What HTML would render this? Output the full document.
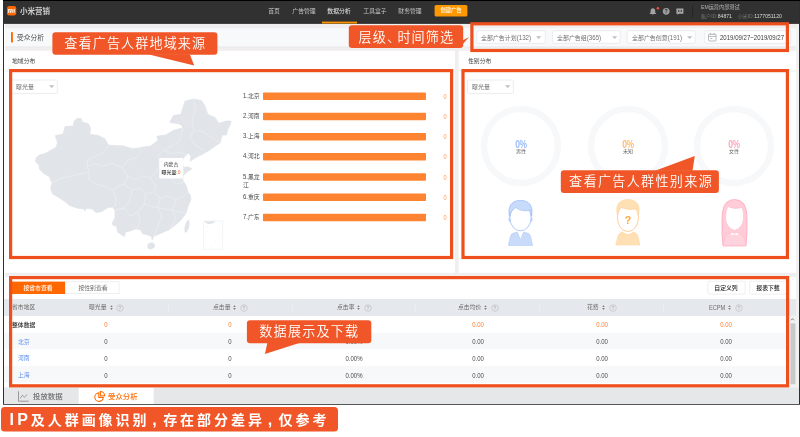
<!DOCTYPE html>
<html lang="zh-CN"><head><meta charset="utf-8"><title>小米营销 - 受众分析</title>
<style>
html,body{margin:0;padding:0;background:#fff;}
body{width:800px;height:437px;overflow:hidden;position:relative;font-family:"Liberation Sans","Noto Sans CJK SC",sans-serif;-webkit-text-size-adjust:none;}
.a{position:absolute;display:block;}
.t{white-space:nowrap;}
.s{transform-origin:0 0;}
.d{display:inline-block;transform:scaleY(1.18);}
#ui{position:absolute;left:0;top:0;width:800px;height:437px;will-change:transform;}
#app,#notes{position:absolute;left:0;top:0;width:800px;height:437px;}
svg{overflow:visible;}
</style></head><body><div id="ui"><div id="app">
<svg class="a" style="left:2px;top:-1px" width="799" height="407"><rect x="1.00" y="1.00" width="797.00" height="404.80" fill="#2e2e2e"/></svg>
<svg class="a" style="left:2px;top:-1px" width="799" height="3"><rect x="1.00" y="1.00" width="797.00" height="1.00" fill="#000"/></svg>
<svg class="a" style="left:3px;top:0px" width="797" height="405"><rect x="1.00" y="1.00" width="795.00" height="403.00" fill="#fff"/></svg>
<svg class="a" style="left:4px;top:22px" width="796" height="383"><rect x="1.00" y="1.50" width="794.00" height="380.50" fill="#f0eeef"/></svg>
<svg class="a" style="left:795px;top:22px" width="5" height="383"><rect x="1.00" y="1.50" width="3.00" height="380.50" fill="#f2f1f2"/></svg>
<svg class="a" style="left:3px;top:0px" width="797" height="25"><rect x="1.00" y="1.00" width="795.00" height="22.90" fill="#313131"/></svg>
<svg class="a" style="left:7px;top:6px" width="9.2" height="9.4" viewBox="0 0 92 94"><rect width="92" height="94" rx="22" fill="#ff6700"/><path d="M12 29H44Q57 29 57 41V67H46V42Q46 38 42 38H23V67H12ZM29.500 46H39.500V67H29.500ZM66 29H77V67H66Z" fill="#fff"/></svg>
<div class="a t s" style="left:19.90px;top:4.90px;font-size:60.00px;line-height:96.00px;color:#cdcdcd;font-weight:700;transform:scale(0.125);">小米营销</div>
<div class="a t s" style="left:274.40px;top:5.92px;font-size:46.80px;line-height:74.88px;color:#c6c6c6;transform:scale(0.125) translateX(-50%);">首页</div>
<div class="a t s" style="left:303.85px;top:5.92px;font-size:46.80px;line-height:74.88px;color:#c6c6c6;transform:scale(0.125) translateX(-50%);">广告管理</div>
<div class="a t s" style="left:339.20px;top:5.92px;font-size:46.80px;line-height:74.88px;color:#ececec;transform:scale(0.125) translateX(-50%);">数据分析</div>
<div class="a t s" style="left:374.65px;top:5.92px;font-size:46.80px;line-height:74.88px;color:#c6c6c6;transform:scale(0.125) translateX(-50%);">工具盒子</div>
<div class="a t s" style="left:409.90px;top:5.92px;font-size:46.80px;line-height:74.88px;color:#c6c6c6;transform:scale(0.125) translateX(-50%);">财务管理</div>
<svg class="a" style="left:321px;top:20px" width="37" height="5"><rect x="1.00" y="1.60" width="35.00" height="1.90" fill="#ff9500"/></svg>
<svg class="a" style="left:433px;top:4px" width="36" height="14"><rect x="1.60" y="1.00" width="32.80" height="11.60" rx="1.5" fill="#ff9800"/></svg>
<div class="a t s" style="left:451.00px;top:6.26px;font-size:42.40px;line-height:67.84px;color:#fff;font-weight:500;transform:scale(0.125) translateX(-50%);">创建广告</div>
<svg class="a" style="left:648px;top:6px" width="40" height="11" viewBox="0 0 40 11">
<path d="M4.900 2.200c1.500 0 2.300 1 2.300 2.400v1.900l.9 1.100v.5H1.700v-.5l.9-1.100V4.600c0-1.400.8-2.400 2.300-2.400zM4.100 8.500h1.600c0 .5-.4.800-.8.800s-.8-.3-.8-.8z" fill="#a2a2a2"/>
<circle cx="9.900" cy="2.200" r="1.200" fill="#ff4d3a"/>
<circle cx="18.200" cy="5.300" r="3.400" fill="#9c9c9c"/>
<text x="18.200" y="7.200" font-size="5.200" font-weight="700" text-anchor="middle" fill="#333" font-family="Liberation Sans, sans-serif">?</text>
<path d="M28.400 2.400h7v5.300h-4.700l-1.300 1.200v-1.200h-1z" fill="#a6a6a6"/>
<rect x="30" y="4.200" width="1.400" height="1.500" fill="#333"/><rect x="32.600" y="4.200" width="1.400" height="1.500" fill="#333"/>
</svg>
<svg class="a" style="left:691px;top:4px" width="3" height="15"><rect x="1.10" y="1.50" width="0.90" height="12.50" fill="#232323"/></svg>
<div class="a t s" style="left:701.00px;top:3.38px;font-size:41.20px;line-height:65.92px;color:#b4b4b4;transform:scale(0.125);">EM运营内部测试</div>
<div class="a t s" style="left:701.00px;top:11.82px;font-size:40.80px;line-height:65.28px;color:#eee;transform:scale(0.125);"><span style="color:#747474">账户ID:</span><span class="d" style="color:#dadada">84871</span><span style="color:#747474;margin-left:44.80px">小米ID:</span><span class="d" style="color:#dadada">1177051120</span></div>
<svg class="a" style="left:4px;top:27px" width="793" height="21"><rect x="1.00" y="1.20" width="791.00" height="18.50" fill="#f8f9fb"/></svg>
<svg class="a" style="left:4px;top:45px" width="793" height="4"><rect x="1.00" y="1.60" width="791.00" height="0.90" fill="#e9e7e8"/></svg>
<svg class="a" style="left:10px;top:31px" width="4" height="13"><rect x="1.00" y="1.20" width="1.90" height="10.20" fill="#ff6a00"/></svg>
<div class="a t s" style="left:17.00px;top:32.20px;font-size:54.00px;line-height:86.40px;color:#505050;transform:scale(0.125);">受众分析</div>
<svg class="a" style="left:475px;top:29px" width="72" height="16"><rect x="1.80" y="1.70" width="68.50" height="12.60" rx="1.0" fill="#fff" stroke="#dfe0e3" stroke-width="0.6"/></svg>
<div class="a t s" style="left:481.30px;top:32.54px;font-size:47.60px;line-height:76.16px;color:#707070;transform:scale(0.125);">全部广告计划<span class="d" style="font-size:49.20px">(132)</span></div>
<svg class="a" style="left:536.40px;top:35.50px" width="5.400" height="3"><path d="M0.100 0.200h5.200L2.700 2.900z" fill="#bcbec2"/></svg>
<svg class="a" style="left:551px;top:29px" width="71" height="16"><rect x="1.50" y="1.70" width="67.70" height="12.60" rx="1.0" fill="#fff" stroke="#dfe0e3" stroke-width="0.6"/></svg>
<div class="a t s" style="left:556.50px;top:32.54px;font-size:47.60px;line-height:76.16px;color:#707070;transform:scale(0.125);">全部广告组<span class="d" style="font-size:49.20px">(365)</span></div>
<svg class="a" style="left:611.60px;top:35.50px" width="5.400" height="3"><path d="M0.100 0.200h5.200L2.700 2.900z" fill="#bcbec2"/></svg>
<svg class="a" style="left:625px;top:29px" width="72" height="16"><rect x="2.20" y="1.70" width="67.90" height="12.60" rx="1.0" fill="#fff" stroke="#dfe0e3" stroke-width="0.6"/></svg>
<div class="a t s" style="left:631.70px;top:32.54px;font-size:47.60px;line-height:76.16px;color:#707070;transform:scale(0.125);">全部广告创意<span class="d" style="font-size:49.20px">(191)</span></div>
<svg class="a" style="left:686.80px;top:35.50px" width="5.400" height="3"><path d="M0.100 0.200h5.200L2.700 2.900z" fill="#bcbec2"/></svg>
<svg class="a" style="left:703px;top:29px" width="90" height="16"><rect x="1.80" y="1.70" width="86.00" height="12.60" rx="1.0" fill="#fff" stroke="#dfe0e3" stroke-width="0.6"/></svg>
<svg class="a" style="left:708px;top:33.400px" width="8.600" height="8.600" viewBox="0 0 86 86"><rect x="5" y="12" width="76" height="68" rx="8" fill="none" stroke="#9a9da2" stroke-width="7"/><path d="M5 34h76M26 2v18M60 2v18M22 56h22" stroke="#9a9da2" stroke-width="7" fill="none"/></svg>
<div class="a t s" style="left:720.00px;top:32.76px;font-size:48.40px;line-height:77.44px;color:#3a3a3a;transform:scale(0.125);"><span class="d">2019/09/27~2019/09/27</span></div>
<svg class="a" style="left:4px;top:49px" width="452" height="225"><rect x="1.00" y="1.80" width="450.00" height="222.00" fill="#fff"/></svg>
<div class="a t s" style="left:11.90px;top:55.62px;font-size:46.80px;line-height:74.88px;color:#444;transform:scale(0.125);">地域分布</div>
<svg class="a" style="left:4px;top:69px" width="452" height="4"><rect x="1.00" y="1.50" width="450.00" height="0.80" fill="#e8e8e8"/></svg>
<svg class="a" style="left:9px;top:78px" width="50" height="17"><rect x="1.30" y="2.00" width="47.00" height="13.40" rx="1.0" fill="#fff" stroke="#dfe0e3" stroke-width="0.6"/></svg>
<div class="a t s" style="left:15.70px;top:82.04px;font-size:47.60px;line-height:76.16px;color:#707070;transform:scale(0.125);">曝光量</div>
<svg class="a" style="left:48.90px;top:85.00px" width="5.400" height="3"><path d="M0.100 0.200h5.200L2.700 2.900z" fill="#bcbec2"/></svg>
<svg class="a" style="left:0;top:0" width="460" height="260" viewBox="0 0 460 260"><path d="M39.6 155.0 L45.1 153.5 L56.1 147.3 L57.5 142.5 L55.4 135.6 L63.0 134.2 L65.1 126.6 L73.3 126.0 L74.0 121.1 L77.5 118.4 L80.9 118.4 L82.3 121.8 L88.5 123.9 L90.5 128.0 L89.8 134.2 L98.8 135.6 L105.0 139.0 L108.4 145.2 L123.5 145.9 L131.8 148.6 L138.3 148.0 L150.6 145.9 L158.2 140.4 L156.8 136.3 L165.8 134.9 L174.0 130.1 L183.0 128.0 L180.9 124.6 L175.4 123.2 L169.9 122.5 L173.3 115.6 L180.9 114.3 L183.0 107.4 L185.0 101.2 L193.3 99.1 L201.5 100.5 L205.0 106.0 L207.7 114.3 L215.3 117.7 L218.7 123.2 L226.3 121.1 L231.1 121.1 L230.4 124.6 L228.3 128.0 L226.3 134.9 L222.2 134.9 L220.1 143.1 L215.3 145.9 L209.8 150.0 L203.3 153.8 L195.0 157.9 L190.2 161.3 L190.9 155.8 L188.1 153.1 L185.4 155.8 L183.3 158.6 L182.0 163.0 L184.0 167.5 L188.1 166.8 L192.0 168.9 L187.5 171.6 L183.3 175.8 L182.6 179.9 L186.1 185.4 L188.1 192.3 L190.2 195.0 L190.9 199.8 L188.1 206.0 L186.1 212.9 L181.3 219.8 L175.8 224.6 L169.6 229.4 L162.0 232.8 L153.8 236.3 L152.2 239.9 L151.5 236.5 L148.0 235.1 L142.5 233.7 L140.5 229.6 L135.7 228.9 L130.2 230.9 L125.3 232.3 L124.7 236.5 L121.9 235.1 L117.8 232.3 L116.4 226.1 L113.0 225.4 L112.3 222.7 L115.0 217.9 L115.0 211.0 L113.0 206.9 L108.1 207.6 L101.3 211.7 L95.8 212.4 L92.3 208.9 L86.1 208.3 L84.8 211.0 L84.1 208.9 L77.9 208.3 L69.6 205.5 L64.1 201.0 L59.6 198.1 L52.7 194.0 L50.6 188.5 L52.0 183.0 L49.3 176.8 L43.8 173.4 L39.6 169.3 L38.9 165.1 L35.5 161.7 L36.2 157.6Z" fill="#e1e5ea" stroke="#e1e5ea" stroke-width="0.8" stroke-linejoin="round"/><path d="M108.4 145.2 L104 152 L96 156 L88 160 L87 166 L89 172 L84 173 L72 176 L62 178 L52 183" fill="none" stroke="#f0f2f5" stroke-width="0.5" stroke-linejoin="round"/><path d="M87 166 L96 164 L104 166 L112 163 L122 168 L128 176 L124 184 L119 186 L113 190 L104 186 L96 184 L89 180 L89 172" fill="none" stroke="#f0f2f5" stroke-width="0.5" stroke-linejoin="round"/><path d="M113 190 L116 198 L115 207" fill="none" stroke="#f0f2f5" stroke-width="0.5" stroke-linejoin="round"/><path d="M122 168 L128 160 L136 158 L142 152 L138.3 148" fill="none" stroke="#f0f2f5" stroke-width="0.5" stroke-linejoin="round"/><path d="M128 176 L136 180 L142 176 L150 178 L156 172 L160 164 L158 156 L164 150 L172 146 L180 140 L183 128" fill="none" stroke="#f0f2f5" stroke-width="0.5" stroke-linejoin="round"/><path d="M124 184 L132 190 L140 188 L146 194 L154 192 L160 198 L168 196 L176 200 L184 196 L188 192" fill="none" stroke="#f0f2f5" stroke-width="0.5" stroke-linejoin="round"/><path d="M132 190 L130 200 L124 208 L116 210" fill="none" stroke="#f0f2f5" stroke-width="0.5" stroke-linejoin="round"/><path d="M146 194 L144 204 L138 212 L140 222 L136 229" fill="none" stroke="#f0f2f5" stroke-width="0.5" stroke-linejoin="round"/><path d="M160 198 L158 208 L162 216 L158 226 L154 236" fill="none" stroke="#f0f2f5" stroke-width="0.5" stroke-linejoin="round"/><path d="M176 200 L172 210 L176 218 L170 229" fill="none" stroke="#f0f2f5" stroke-width="0.5" stroke-linejoin="round"/><path d="M144 204 L158 208 L172 210 L186 213" fill="none" stroke="#f0f2f5" stroke-width="0.5" stroke-linejoin="round"/><path d="M124 208 L130 216 L138 212" fill="none" stroke="#f0f2f5" stroke-width="0.5" stroke-linejoin="round"/><path d="M160 164 L168 168 L176 164 L183 167" fill="none" stroke="#f0f2f5" stroke-width="0.5" stroke-linejoin="round"/><path d="M164 150 L172 154 L180 152 L186 155" fill="none" stroke="#f0f2f5" stroke-width="0.5" stroke-linejoin="round"/><path d="M150 178 L156 186 L154 192" fill="none" stroke="#f0f2f5" stroke-width="0.5" stroke-linejoin="round"/><path d="M168 168 L170 178 L176 184 L184 182" fill="none" stroke="#f0f2f5" stroke-width="0.5" stroke-linejoin="round"/><path d="M193.300 99.100 L196 110 L192 120 L194 130 L190 138 L196 146 L204 150" fill="none" stroke="#f0f2f5" stroke-width="0.5" stroke-linejoin="round"/><path d="M194 130 L204 132 L212 138 L220 143" fill="none" stroke="#f0f2f5" stroke-width="0.5" stroke-linejoin="round"/><ellipse cx="151.1" cy="245.8" rx="3.9" ry="3.3" fill="#e1e5ea" transform="rotate(-25 151.1 245.8)"/><ellipse cx="187" cy="226.400" rx="2.200" ry="6.500" fill="#e1e5ea" transform="rotate(14 187 226.400)"/><rect x="203.400" y="221" width="19.400" height="28.200" fill="#fff" stroke="#eceef1" stroke-width="0.600"/><path d="M204.200 221.300h11.500q-1.500 2.600-5.500 2.800-4.500 0-6-2.800z" fill="#e1e5ea"/><circle cx="207.4" cy="227" r="0.450" fill="#e3e6ea"/><circle cx="219" cy="230.5" r="0.450" fill="#e3e6ea"/><circle cx="208" cy="235.5" r="0.450" fill="#e3e6ea"/><circle cx="218.5" cy="236" r="0.450" fill="#e3e6ea"/><circle cx="205.5" cy="241" r="0.450" fill="#e3e6ea"/><circle cx="215" cy="241.5" r="0.450" fill="#e3e6ea"/><circle cx="211" cy="246" r="0.450" fill="#e3e6ea"/><circle cx="207" cy="231.5" r="0.450" fill="#e3e6ea"/><circle cx="220.5" cy="225" r="0.450" fill="#e3e6ea"/></svg>
<svg class="a" style="left:158px;top:157px" width="27" height="23"><rect x="1.30" y="1.00" width="24.00" height="20.40" rx="1.0" fill="rgba(255,255,255,0.96)"/></svg>
<div class="a t s" style="left:171.40px;top:159.68px;font-size:39.20px;line-height:62.72px;color:#333;transform:scale(0.125) translateX(-50%);">内蒙古</div>
<div class="a t s" style="left:171.40px;top:168.08px;font-size:39.20px;line-height:62.72px;color:#333;font-weight:500;transform:scale(0.125) translateX(-50%);">曝光量:<span style="color:#ff7a2e;font-weight:400">0</span></div>
<svg class="a" style="left:262px;top:91px" width="165" height="10"><rect x="1.00" y="1.50" width="163.00" height="7.50" rx="0.8" fill="#ff8432"/></svg>
<div class="a t s" style="left:243.20px;top:90.72px;font-size:46.80px;line-height:74.88px;color:#484848;transform:scale(0.125);"><span class="d" style="font-size:48.00px">1.</span>北京</div>
<div class="a t s" style="left:444.60px;top:91.82px;font-size:44.80px;line-height:71.68px;color:#ff9a55;transform:scale(0.125) translateX(-50%);"><span class="d">0</span></div>
<svg class="a" style="left:262px;top:111px" width="165" height="11"><rect x="1.00" y="1.70" width="163.00" height="7.50" rx="0.8" fill="#ff8432"/></svg>
<div class="a t s" style="left:243.20px;top:110.92px;font-size:46.80px;line-height:74.88px;color:#484848;transform:scale(0.125);"><span class="d" style="font-size:48.00px">2.</span>河南</div>
<div class="a t s" style="left:444.60px;top:112.02px;font-size:44.80px;line-height:71.68px;color:#ff9a55;transform:scale(0.125) translateX(-50%);"><span class="d">0</span></div>
<svg class="a" style="left:262px;top:131px" width="165" height="11"><rect x="1.00" y="1.90" width="163.00" height="7.50" rx="0.8" fill="#ff8432"/></svg>
<div class="a t s" style="left:243.20px;top:131.12px;font-size:46.80px;line-height:74.88px;color:#484848;transform:scale(0.125);"><span class="d" style="font-size:48.00px">3.</span>上海</div>
<div class="a t s" style="left:444.60px;top:132.22px;font-size:44.80px;line-height:71.68px;color:#ff9a55;transform:scale(0.125) translateX(-50%);"><span class="d">0</span></div>
<svg class="a" style="left:262px;top:152px" width="165" height="10"><rect x="1.00" y="1.10" width="163.00" height="7.50" rx="0.8" fill="#ff8432"/></svg>
<div class="a t s" style="left:243.20px;top:151.32px;font-size:46.80px;line-height:74.88px;color:#484848;transform:scale(0.125);"><span class="d" style="font-size:48.00px">4.</span>河北</div>
<div class="a t s" style="left:444.60px;top:152.42px;font-size:44.80px;line-height:71.68px;color:#ff9a55;transform:scale(0.125) translateX(-50%);"><span class="d">0</span></div>
<svg class="a" style="left:262px;top:172px" width="165" height="10"><rect x="1.00" y="1.30" width="163.00" height="7.50" rx="0.8" fill="#ff8432"/></svg>
<div class="a t s" style="left:243.20px;top:171.52px;font-size:46.80px;line-height:74.88px;color:#484848;transform:scale(0.125);"><span class="d" style="font-size:48.00px">5.</span>黑龙</div>
<div class="a t s" style="left:444.60px;top:172.62px;font-size:44.80px;line-height:71.68px;color:#ff9a55;transform:scale(0.125) translateX(-50%);"><span class="d">0</span></div>
<svg class="a" style="left:262px;top:192px" width="165" height="10"><rect x="1.00" y="1.50" width="163.00" height="7.50" rx="0.8" fill="#ff8432"/></svg>
<div class="a t s" style="left:243.20px;top:191.72px;font-size:46.80px;line-height:74.88px;color:#484848;transform:scale(0.125);"><span class="d" style="font-size:48.00px">6.</span>重庆</div>
<div class="a t s" style="left:444.60px;top:192.82px;font-size:44.80px;line-height:71.68px;color:#ff9a55;transform:scale(0.125) translateX(-50%);"><span class="d">0</span></div>
<svg class="a" style="left:262px;top:212px" width="165" height="11"><rect x="1.00" y="1.70" width="163.00" height="7.50" rx="0.8" fill="#ff8432"/></svg>
<div class="a t s" style="left:243.20px;top:211.92px;font-size:46.80px;line-height:74.88px;color:#484848;transform:scale(0.125);"><span class="d" style="font-size:48.00px">7.</span>广东</div>
<div class="a t s" style="left:444.60px;top:213.02px;font-size:44.80px;line-height:71.68px;color:#ff9a55;transform:scale(0.125) translateX(-50%);"><span class="d">0</span></div>
<div class="a t s" style="left:243.20px;top:180.12px;font-size:46.80px;line-height:74.88px;color:#484848;transform:scale(0.125);">江</div>
<svg class="a" style="left:457px;top:49px" width="340" height="225"><rect x="1.60" y="1.80" width="337.40" height="222.00" fill="#fff"/></svg>
<div class="a t s" style="left:467.50px;top:55.82px;font-size:46.80px;line-height:74.88px;color:#444;transform:scale(0.125);">性别分布</div>
<svg class="a" style="left:457px;top:69px" width="340" height="4"><rect x="1.60" y="1.50" width="337.40" height="0.80" fill="#e8e8e8"/></svg>
<svg class="a" style="left:466px;top:78px" width="49" height="17"><rect x="1.50" y="2.00" width="45.90" height="13.40" rx="1.0" fill="#fff" stroke="#dfe0e3" stroke-width="0.6"/></svg>
<div class="a t s" style="left:471.90px;top:82.04px;font-size:47.60px;line-height:76.16px;color:#707070;transform:scale(0.125);">曝光量</div>
<svg class="a" style="left:504.50px;top:85.00px" width="5.400" height="3"><path d="M0.100 0.200h5.200L2.700 2.900z" fill="#bcbec2"/></svg>
<svg class="a" style="left:478.70px;top:104.20px" width="84" height="84"><circle cx="42" cy="42" r="37" fill="none" stroke="#f7f8fa" stroke-width="6.400"/></svg>
<div class="a t s" style="left:520.70px;top:137.50px;font-size:68.00px;line-height:108.80px;color:#9bbcf9;font-weight:700;transform:scale(0.125) translateX(-50%);letter-spacing:-2.40px;"><span class="d">0%</span></div>
<div class="a t s" style="left:520.70px;top:147.30px;font-size:40.00px;line-height:64.00px;color:#666;transform:scale(0.125) translateX(-50%);">男性</div>
<svg class="a" style="left:585.50px;top:104.20px" width="84" height="84"><circle cx="42" cy="42" r="37" fill="none" stroke="#f7f8fa" stroke-width="6.400"/></svg>
<div class="a t s" style="left:627.50px;top:137.50px;font-size:68.00px;line-height:108.80px;color:#ffbb74;font-weight:700;transform:scale(0.125) translateX(-50%);letter-spacing:-2.40px;"><span class="d">0%</span></div>
<div class="a t s" style="left:627.50px;top:147.30px;font-size:40.00px;line-height:64.00px;color:#666;transform:scale(0.125) translateX(-50%);">未知</div>
<svg class="a" style="left:692.20px;top:104.20px" width="84" height="84"><circle cx="42" cy="42" r="37" fill="none" stroke="#f7f8fa" stroke-width="6.400"/></svg>
<div class="a t s" style="left:734.20px;top:137.50px;font-size:68.00px;line-height:108.80px;color:#ffa6bc;font-weight:700;transform:scale(0.125) translateX(-50%);letter-spacing:-2.40px;"><span class="d">0%</span></div>
<div class="a t s" style="left:734.20px;top:147.30px;font-size:40.00px;line-height:64.00px;color:#666;transform:scale(0.125) translateX(-50%);">女性</div>
<svg class="a" style="left:506px;top:198.500px" width="29" height="47.800" viewBox="0 0 29 49" preserveAspectRatio="none">
<path d="M2.400 47.600 L4.300 38.500 Q5 35.300 8.500 34.600 L11.500 33.800 L14.500 40.500 L17.500 33.800 L20.500 34.600 Q24 35.300 24.700 38.500 L26.600 47.600 Z" fill="#c9dbfb" stroke="#a9c5f9" stroke-width="0.500"/>
<path d="M12.200 34 L14.500 41 L16.800 34 Z" fill="#fff"/>
<ellipse cx="3.900" cy="21" rx="1.200" ry="2.100" fill="#c9dbfb" stroke="#9dbcf8" stroke-width="0.400"/>
<ellipse cx="25.100" cy="21" rx="1.200" ry="2.100" fill="#c9dbfb" stroke="#9dbcf8" stroke-width="0.400"/>
<ellipse cx="14.500" cy="19.200" rx="10.600" ry="13.400" fill="#fff" stroke="#8db4f7" stroke-width="0.700"/>
<path d="M3.300 17.800 Q2 10 4.600 6 Q8 1.400 14.500 1.400 Q21 1.400 24.400 6 Q27 10 25.700 17.800 Q25.400 13.600 24.300 11.300 Q17 13.800 9.600 8.800 Q5 11.600 3.300 17.800 Z" fill="#c9dbfb" stroke="#8db4f7" stroke-width="0.600" stroke-linejoin="round"/>
</svg>
<svg class="a" style="left:613.600px;top:198.400px" width="27.800" height="48.600" viewBox="0 0 29 49" preserveAspectRatio="none">
<path d="M1.900 47.400 L3.900 39 Q4.800 35.300 8.800 34.300 Q14.500 39.200 20.200 34.300 Q24.200 35.300 25.100 39 L27.100 47.400 Z" fill="#ffe0b5" stroke="#ffcf96" stroke-width="0.500"/>
<ellipse cx="14.500" cy="19.800" rx="11" ry="14" fill="#fff" stroke="#ffb763" stroke-width="0.700"/>
<path d="M3.400 17 Q1.800 9.500 4.600 5.500 Q8 1.400 14.500 1.400 Q21 1.400 24.400 5.500 Q27.200 9.500 25.600 17 Q25.400 13.500 24.400 11 Q15 13 7 9.500 Q4.400 12.500 3.400 17 Z" fill="#ffe0b5" stroke="#ffcf96" stroke-width="0.500" stroke-linejoin="round"/>
<text x="14.700" y="26.600" font-size="11" font-weight="700" fill="#ffa63f" text-anchor="middle" font-family="Liberation Sans, sans-serif">?</text>
</svg>
<svg class="a" style="left:719.500px;top:197.500px" width="29" height="50" viewBox="0 0 29 50">
<path d="M3 47.800 Q1.600 36 2 22 Q2 9 6.500 4.500 Q10 1.500 14.500 1.500 Q20 1.500 23.500 5.500 Q27 10 27 22 Q27.400 36 26 47.800 Z" fill="#ffccd8" stroke="#ff9db5" stroke-width="0.700" stroke-linejoin="round"/>
<path d="M5.600 21 Q5.400 13 7.800 8.600 Q14 12 22.200 9.600 Q24 15 23.600 21 Q22.600 30 14.600 32.400 Q6.600 30 5.600 21 Z" fill="#fff" stroke="#ffb3c5" stroke-width="0.500"/>
<path d="M3.200 47.800 Q4 38 8.500 35.500 L11 34.500 Q14.500 36.500 18 34.500 L20.500 35.500 Q25 38 25.800 47.800 Z" fill="#ffd3dd" stroke="#ffb3c5" stroke-width="0.500"/>
<path d="M10.500 34.600 L14.500 35.800 L18.500 34.600 L17.200 37.200 L14.500 36.600 L11.800 37.200 Z" fill="#fff"/>
</svg>
<svg class="a" style="left:4px;top:276px" width="793" height="113"><rect x="1.00" y="1.00" width="791.00" height="110.50" fill="#fff"/></svg>
<svg class="a" style="left:9px;top:280px" width="58" height="15"><rect x="1.00" y="1.60" width="55.10" height="12.40" fill="#ff6700"/></svg>
<div class="a t s" style="left:38.30px;top:283.12px;font-size:46.80px;line-height:74.88px;color:#fff;font-weight:500;transform:scale(0.125) translateX(-50%);">按省市查看</div>
<svg class="a" style="left:64px;top:280px" width="57" height="15"><rect x="1.35" y="1.85" width="53.70" height="11.90" fill="#fff" stroke="#dcdfe3" stroke-width="0.5"/></svg>
<div class="a t s" style="left:92.60px;top:283.42px;font-size:46.80px;line-height:74.88px;color:#6a6a6a;transform:scale(0.125) translateX(-50%);">按性别查看</div>
<svg class="a" style="left:706px;top:280px" width="41" height="16"><rect x="1.85" y="1.25" width="37.30" height="12.90" rx="1.0" fill="#fff" stroke="#dcdfe3" stroke-width="0.5"/></svg>
<div class="a t s" style="left:726.20px;top:282.82px;font-size:46.80px;line-height:74.88px;color:#222;font-weight:500;transform:scale(0.125) translateX(-50%);">自定义列</div>
<svg class="a" style="left:748px;top:280px" width="41" height="16"><rect x="1.65" y="1.25" width="38.10" height="12.90" rx="1.0" fill="#fff" stroke="#dcdfe3" stroke-width="0.5"/></svg>
<div class="a t s" style="left:768.40px;top:282.82px;font-size:46.80px;line-height:74.88px;color:#222;font-weight:500;transform:scale(0.125) translateX(-50%);">报表下载</div>
<svg class="a" style="left:3px;top:298px" width="794" height="19"><rect x="1.00" y="1.00" width="792.00" height="16.90" fill="#e5e8ec"/></svg>
<svg class="a" style="left:3px;top:315px" width="794" height="19"><rect x="1.00" y="1.10" width="792.00" height="16.65" fill="#fff"/></svg>
<svg class="a" style="left:3px;top:331px" width="794" height="20"><rect x="1.00" y="1.75" width="792.00" height="16.65" fill="#f7f8fa"/></svg>
<svg class="a" style="left:3px;top:348px" width="794" height="20"><rect x="1.00" y="1.40" width="792.00" height="16.65" fill="#fff"/></svg>
<svg class="a" style="left:3px;top:365px" width="794" height="19"><rect x="1.00" y="1.05" width="792.00" height="16.65" fill="#f7f8fa"/></svg>
<div class="a t s" style="left:12.30px;top:302.02px;font-size:46.80px;line-height:74.88px;color:#6a6a6a;transform:scale(0.125);">省市地区</div>
<div class="a t s" style="left:88.93px;top:302.02px;font-size:46.80px;line-height:74.88px;color:#6a6a6a;transform:scale(0.125);">曝光量</div>
<svg class="a" style="left:109.58px;top:305.00px" width="3" height="5.200"><path d="M1.500 0.300L2.800 2.100H0.200zM1.500 4.900L0.200 3.100H2.800z" fill="#7c7c7c"/></svg>
<svg class="a" style="left:116.28px;top:303.50px" width="8" height="8"><circle cx="4" cy="4" r="3.300" fill="none" stroke="#b4b6bb" stroke-width="0.550"/><text x="4" y="5.800" font-size="5" text-anchor="middle" fill="#a9abb0" font-family="Liberation Sans, sans-serif">?</text></svg>
<div class="a t s" style="left:212.82px;top:302.02px;font-size:46.80px;line-height:74.88px;color:#6a6a6a;transform:scale(0.125);">点击量</div>
<svg class="a" style="left:233.47px;top:305.00px" width="3" height="5.200"><path d="M1.500 0.300L2.800 2.100H0.200zM1.500 4.900L0.200 3.100H2.800z" fill="#7c7c7c"/></svg>
<svg class="a" style="left:240.18px;top:303.50px" width="8" height="8"><circle cx="4" cy="4" r="3.300" fill="none" stroke="#b4b6bb" stroke-width="0.550"/><text x="4" y="5.800" font-size="5" text-anchor="middle" fill="#a9abb0" font-family="Liberation Sans, sans-serif">?</text></svg>
<div class="a t s" style="left:336.73px;top:302.02px;font-size:46.80px;line-height:74.88px;color:#6a6a6a;transform:scale(0.125);">点击率</div>
<svg class="a" style="left:357.38px;top:305.00px" width="3" height="5.200"><path d="M1.500 0.300L2.800 2.100H0.200zM1.500 4.900L0.200 3.100H2.800z" fill="#7c7c7c"/></svg>
<svg class="a" style="left:364.08px;top:303.50px" width="8" height="8"><circle cx="4" cy="4" r="3.300" fill="none" stroke="#b4b6bb" stroke-width="0.550"/><text x="4" y="5.800" font-size="5" text-anchor="middle" fill="#a9abb0" font-family="Liberation Sans, sans-serif">?</text></svg>
<div class="a t s" style="left:457.60px;top:302.02px;font-size:46.80px;line-height:74.88px;color:#6a6a6a;transform:scale(0.125);">点击均价</div>
<svg class="a" style="left:484.10px;top:305.00px" width="3" height="5.200"><path d="M1.500 0.300L2.800 2.100H0.200zM1.500 4.900L0.200 3.100H2.800z" fill="#7c7c7c"/></svg>
<svg class="a" style="left:490.80px;top:303.50px" width="8" height="8"><circle cx="4" cy="4" r="3.300" fill="none" stroke="#b4b6bb" stroke-width="0.550"/><text x="4" y="5.800" font-size="5" text-anchor="middle" fill="#a9abb0" font-family="Liberation Sans, sans-serif">?</text></svg>
<div class="a t s" style="left:587.35px;top:302.02px;font-size:46.80px;line-height:74.88px;color:#6a6a6a;transform:scale(0.125);">花费</div>
<svg class="a" style="left:602.15px;top:305.00px" width="3" height="5.200"><path d="M1.500 0.300L2.800 2.100H0.200zM1.500 4.900L0.200 3.100H2.800z" fill="#7c7c7c"/></svg>
<svg class="a" style="left:608.85px;top:303.50px" width="8" height="8"><circle cx="4" cy="4" r="3.300" fill="none" stroke="#b4b6bb" stroke-width="0.550"/><text x="4" y="5.800" font-size="5" text-anchor="middle" fill="#a9abb0" font-family="Liberation Sans, sans-serif">?</text></svg>
<div class="a t s" style="left:708.75px;top:302.02px;font-size:46.80px;line-height:74.88px;color:#6a6a6a;transform:scale(0.125);"><span class="d" style="font-size:45.20px;position:relative;top:5.60px">ECPM</span></div>
<svg class="a" style="left:728.35px;top:305.00px" width="3" height="5.200"><path d="M1.500 0.300L2.800 2.100H0.200zM1.500 4.900L0.200 3.100H2.800z" fill="#7c7c7c"/></svg>
<svg class="a" style="left:735.05px;top:303.50px" width="8" height="8"><circle cx="4" cy="4" r="3.300" fill="none" stroke="#b4b6bb" stroke-width="0.550"/><text x="4" y="5.800" font-size="5" text-anchor="middle" fill="#a9abb0" font-family="Liberation Sans, sans-serif">?</text></svg>
<svg class="a" style="left:167px;top:301px" width="3" height="13"><rect x="1.00" y="1.20" width="0.60" height="10.20" fill="#f0f2f5"/></svg>
<svg class="a" style="left:290px;top:301px" width="4" height="13"><rect x="1.90" y="1.20" width="0.60" height="10.20" fill="#f0f2f5"/></svg>
<svg class="a" style="left:413px;top:301px" width="4" height="13"><rect x="1.90" y="1.20" width="0.60" height="10.20" fill="#f0f2f5"/></svg>
<svg class="a" style="left:538px;top:301px" width="3" height="13"><rect x="1.20" y="1.20" width="0.60" height="10.20" fill="#f0f2f5"/></svg>
<svg class="a" style="left:662px;top:301px" width="3" height="13"><rect x="1.30" y="1.20" width="0.60" height="10.20" fill="#f0f2f5"/></svg>
<div class="a t s" style="left:12.40px;top:319.85px;font-size:46.80px;line-height:74.88px;color:#333;font-weight:500;transform:scale(0.125);">整体数据</div>
<div class="a t s" style="left:106.20px;top:319.82px;font-size:48.00px;line-height:76.80px;color:#ff7a2e;transform:scale(0.125) translateX(-50%);"><span class="d">0</span></div>
<div class="a t s" style="left:230.10px;top:319.82px;font-size:48.00px;line-height:76.80px;color:#ff7a2e;transform:scale(0.125) translateX(-50%);"><span class="d">0</span></div>
<div class="a t s" style="left:354.00px;top:319.82px;font-size:48.00px;line-height:76.80px;color:#ff7a2e;transform:scale(0.125) translateX(-50%);"><span class="d">0.00%</span></div>
<div class="a t s" style="left:477.80px;top:319.82px;font-size:48.00px;line-height:76.80px;color:#ff7a2e;transform:scale(0.125) translateX(-50%);"><span class="d">0.00</span></div>
<div class="a t s" style="left:601.70px;top:319.82px;font-size:48.00px;line-height:76.80px;color:#ff7a2e;transform:scale(0.125) translateX(-50%);"><span class="d">0.00</span></div>
<div class="a t s" style="left:725.50px;top:319.82px;font-size:48.00px;line-height:76.80px;color:#ff7a2e;transform:scale(0.125) translateX(-50%);"><span class="d">0.00</span></div>
<div class="a t s" style="left:18.30px;top:336.50px;font-size:46.80px;line-height:74.88px;color:#5a8df0;transform:scale(0.125);">北京</div>
<div class="a t s" style="left:106.20px;top:337.17px;font-size:48.00px;line-height:76.80px;color:#484848;transform:scale(0.125) translateX(-50%);"><span class="d">0</span></div>
<div class="a t s" style="left:230.10px;top:337.17px;font-size:48.00px;line-height:76.80px;color:#484848;transform:scale(0.125) translateX(-50%);"><span class="d">0</span></div>
<div class="a t s" style="left:354.00px;top:337.17px;font-size:48.00px;line-height:76.80px;color:#484848;transform:scale(0.125) translateX(-50%);"><span class="d">0.00%</span></div>
<div class="a t s" style="left:477.80px;top:337.17px;font-size:48.00px;line-height:76.80px;color:#484848;transform:scale(0.125) translateX(-50%);"><span class="d">0.00</span></div>
<div class="a t s" style="left:601.70px;top:337.17px;font-size:48.00px;line-height:76.80px;color:#484848;transform:scale(0.125) translateX(-50%);"><span class="d">0.00</span></div>
<div class="a t s" style="left:725.50px;top:337.17px;font-size:48.00px;line-height:76.80px;color:#484848;transform:scale(0.125) translateX(-50%);"><span class="d">0.00</span></div>
<div class="a t s" style="left:18.30px;top:353.14px;font-size:46.80px;line-height:74.88px;color:#5a8df0;transform:scale(0.125);">河南</div>
<div class="a t s" style="left:106.20px;top:353.82px;font-size:48.00px;line-height:76.80px;color:#484848;transform:scale(0.125) translateX(-50%);"><span class="d">0</span></div>
<div class="a t s" style="left:230.10px;top:353.82px;font-size:48.00px;line-height:76.80px;color:#484848;transform:scale(0.125) translateX(-50%);"><span class="d">0</span></div>
<div class="a t s" style="left:354.00px;top:353.82px;font-size:48.00px;line-height:76.80px;color:#484848;transform:scale(0.125) translateX(-50%);"><span class="d">0.00%</span></div>
<div class="a t s" style="left:477.80px;top:353.82px;font-size:48.00px;line-height:76.80px;color:#484848;transform:scale(0.125) translateX(-50%);"><span class="d">0.00</span></div>
<div class="a t s" style="left:601.70px;top:353.82px;font-size:48.00px;line-height:76.80px;color:#484848;transform:scale(0.125) translateX(-50%);"><span class="d">0.00</span></div>
<div class="a t s" style="left:725.50px;top:353.82px;font-size:48.00px;line-height:76.80px;color:#484848;transform:scale(0.125) translateX(-50%);"><span class="d">0.00</span></div>
<div class="a t s" style="left:18.30px;top:369.80px;font-size:46.80px;line-height:74.88px;color:#5a8df0;transform:scale(0.125);">上海</div>
<div class="a t s" style="left:106.20px;top:370.88px;font-size:48.00px;line-height:76.80px;color:#484848;transform:scale(0.125) translateX(-50%);"><span class="d">0</span></div>
<div class="a t s" style="left:230.10px;top:370.88px;font-size:48.00px;line-height:76.80px;color:#484848;transform:scale(0.125) translateX(-50%);"><span class="d">0</span></div>
<div class="a t s" style="left:354.00px;top:370.88px;font-size:48.00px;line-height:76.80px;color:#484848;transform:scale(0.125) translateX(-50%);"><span class="d">0.00%</span></div>
<div class="a t s" style="left:477.80px;top:370.88px;font-size:48.00px;line-height:76.80px;color:#484848;transform:scale(0.125) translateX(-50%);"><span class="d">0.00</span></div>
<div class="a t s" style="left:601.70px;top:370.88px;font-size:48.00px;line-height:76.80px;color:#484848;transform:scale(0.125) translateX(-50%);"><span class="d">0.00</span></div>
<div class="a t s" style="left:725.50px;top:370.88px;font-size:48.00px;line-height:76.80px;color:#484848;transform:scale(0.125) translateX(-50%);"><span class="d">0.00</span></div>
<svg class="a" style="left:788px;top:315px" width="9" height="74"><rect x="1.60" y="1.10" width="6.40" height="71.40" fill="#f1f1f1"/></svg>
<svg class="a" style="left:789px;top:322px" width="8" height="64"><rect x="1.40" y="1.30" width="5.00" height="61.00" fill="#c9c9c9"/></svg>
<svg class="a" style="left:790.400px;top:316.800px" width="5" height="5"><path d="M1 3.300L2.500 1.600L4 3.300" fill="none" stroke="#555" stroke-width="0.700"/></svg>
<svg class="a" style="left:3px;top:386px" width="797" height="19"><rect x="1.00" y="1.50" width="795.00" height="16.50" fill="#e6e7e9"/></svg>
<svg class="a" style="left:77px;top:386px" width="78" height="19"><rect x="1.70" y="1.50" width="75.00" height="16.50" fill="#fff"/></svg>
<svg class="a" style="left:17.800px;top:390.600px" width="11" height="11" viewBox="0 0 21 21"><path d="M1 0.500V19.500H20.500" fill="none" stroke="#8a8a8a" stroke-width="1.600"/><path d="M4.500 14L8.500 8L12.500 12L17.500 6.500" fill="none" stroke="#8a8a8a" stroke-width="1.500"/></svg>
<div class="a t s" style="left:32.60px;top:390.58px;font-size:59.20px;line-height:94.72px;color:#6e6e6e;font-weight:500;transform:scale(0.125);">投放数据</div>
<svg class="a" style="left:93.700px;top:390.700px" width="11.200" height="11.200" viewBox="0 0 21 21"><path d="M9 3.500A8 8 0 1 0 17.500 12H9z" fill="none" stroke="#ff6a00" stroke-width="2"/><path d="M12 1v8h8A8 8 0 0 0 12 1z" fill="none" stroke="#ff6a00" stroke-width="2"/></svg>
<div class="a t s" style="left:108.00px;top:390.58px;font-size:59.20px;line-height:94.72px;color:#ff6a00;font-weight:500;transform:scale(0.125);">受众分析</div>
</div><div id="notes">
<svg class="a" style="left:0;top:0" width="800" height="437" viewBox="0 0 800 437"><rect x="10.60" y="70.60" width="441.00" height="186.90" fill="none" stroke="#ef4f1d" stroke-width="3.2"/><rect x="463.00" y="70.60" width="324.40" height="186.90" fill="none" stroke="#ef4f1d" stroke-width="3.2"/><rect x="471.90" y="23.80" width="315.50" height="26.70" fill="none" stroke="#ef4f1d" stroke-width="3.2"/><rect x="10.60" y="277.60" width="777.00" height="108.20" fill="none" stroke="#ef4f1d" stroke-width="3.2"/><rect x="52.4" y="32.2" width="165.00" height="22.50" rx="3.2" fill="#f05627"/><path d="M148 54.3 L189.8 54.3 L194.2 65.6Z" fill="#f05627"/><rect x="348.8" y="25.3" width="114.40" height="22.70" rx="3.2" fill="#f05627"/><path d="M462.5 40.4 L469.1 36.9 L462.5 44.6Z" fill="#f05627"/><rect x="560.8" y="170.2" width="158.10" height="22.70" rx="3.2" fill="#f05627"/><path d="M655 170.8 L694.8 155.9 L692.5 170.8Z" fill="#f05627"/><rect x="246.9" y="320.3" width="124.40" height="22.90" rx="3.2" fill="#f05627"/><path d="M267.4 342.8 L300 342.8 L264.9 353.9Z" fill="#f05627"/><rect x="1" y="407.100" width="337" height="24.500" rx="3.600" fill="#f05627"/></svg>
<div class="a t " style="left:64.30px;top:34.20px;font-size:13.1px;line-height:20px;color:#fff;font-weight:350;letter-spacing:1.1px;">查看广告人群地域来源</div>
<div class="a t " style="left:358.60px;top:27.80px;font-size:13.1px;line-height:20px;color:#fff;font-weight:350;letter-spacing:1.1px;">层级<span style="margin-right:-3.800px">、</span>时间筛选</div>
<div class="a t " style="left:569.10px;top:172.10px;font-size:13.1px;line-height:20px;color:#fff;font-weight:350;letter-spacing:1.3px;">查看广告人群性别来源</div>
<div class="a t " style="left:259.30px;top:322.10px;font-size:13.1px;line-height:20px;color:#fff;font-weight:350;letter-spacing:1.2px;">数据展示及下载</div>
<div class="a t " style="left:9.60px;top:409.60px;font-size:14px;line-height:20px;color:#fff;font-weight:700;letter-spacing:2.95px;"><span style="font-size:16px;font-weight:700;letter-spacing:0"><span style="margin-right:3.200px">I</span><span style="margin-right:2.900px">P</span></span>及人群画像识别<span style="display:inline-block;width:13.700px;padding-left:2.900px;box-sizing:border-box;letter-spacing:0;font-size:16px;font-weight:700">,</span>存在部分差异<span style="display:inline-block;width:13.700px;padding-left:2.900px;box-sizing:border-box;letter-spacing:0;font-size:16px;font-weight:700">,</span>仅参考</div>
</div></div></body></html>
